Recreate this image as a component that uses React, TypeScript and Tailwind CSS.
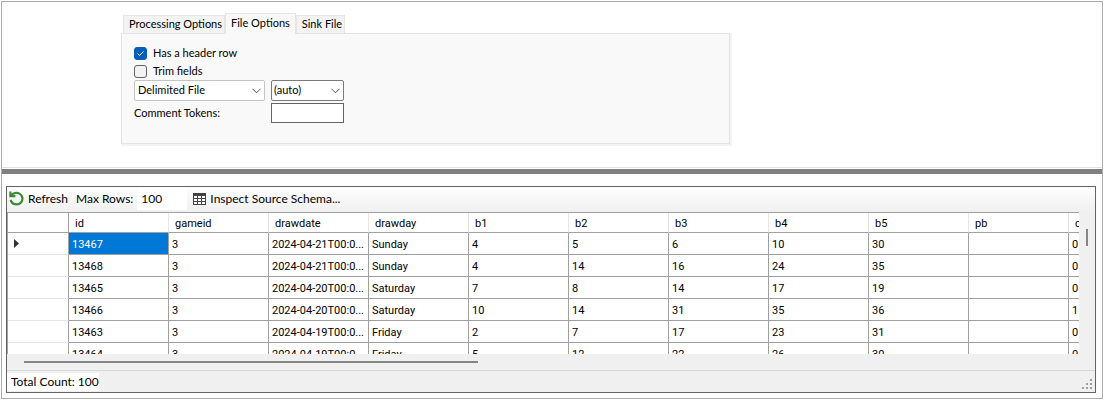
import { useState } from "react";

type Tab = "Processing Options" | "File Options" | "Sink File";

const TABS: Tab[] = ["Processing Options", "File Options", "Sink File"];

const COLUMNS = ["id", "gameid", "drawdate", "drawday", "b1", "b2", "b3", "b4", "b5", "pb", "c"];

const ROWS = [
  ["13467", "3", "2024-04-21T00:0...", "Sunday", "4", "5", "6", "10", "30", "", "0"],
  ["13468", "3", "2024-04-21T00:0...", "Sunday", "4", "14", "16", "24", "35", "", "0"],
  ["13465", "3", "2024-04-20T00:0...", "Saturday", "7", "8", "14", "17", "19", "", "0"],
  ["13466", "3", "2024-04-20T00:0...", "Saturday", "10", "14", "31", "35", "36", "", "1"],
  ["13463", "3", "2024-04-19T00:0...", "Friday", "2", "7", "17", "23", "31", "", "0"],
  ["13464", "3", "2024-04-19T00:0...", "Friday", "5", "12", "22", "26", "30", "", "0"],
];

function Chevron() {
  return (
    <svg className="pointer-events-none absolute right-1 top-1/2 -translate-y-1/2" width="9" height="6" viewBox="0 0 9 6" fill="none" stroke="#555" aria-hidden="true">
      <path d="M0.5 0.8 L4.5 4.8 L8.5 0.8" />
    </svg>
  );
}

function RefreshIcon() {
  return (
    <svg width="15" height="15" viewBox="0 0 15 15" fill="none" stroke="#388a34" strokeWidth="2.2" aria-hidden="true">
      <path d="M2 4.6 C4 1.8 7.6 1 10.4 2.6 C13.6 4.4 14.4 8.4 12.2 11.2 C9.6 14.4 4.6 14.2 2.4 10.6 C2 10 1.8 9.4 1.6 8.8" />
      <path d="M1.4 0.4 V5.2 H6.4" />
    </svg>
  );
}

function TableIcon() {
  return (
    <svg width="13" height="12" viewBox="0 0 13 12" aria-hidden="true">
      <path d="M0 0 H13 V12 H0 Z" fill="#424242" />
      <path d="M1 3h3v2h-3z M5 3h3v2h-3z M9 3h3v2h-3z M1 6h3v2h-3z M5 6h3v2h-3z M9 6h3v2h-3z M1 9h3v2h-3z M5 9h3v2h-3z M9 9h3v2h-3z" fill="#fff" />
    </svg>
  );
}

function Check({ label, initial }: { label: string; initial: boolean }) {
  const [checked, setChecked] = useState(initial);

  return (
    <label className="flex h-[18px] items-center gap-1.5">
      <span className="relative flex">
        <input
          type="checkbox"
          checked={checked}
          onChange={(e) => setChecked(e.target.checked)}
          className="size-[13px] appearance-none rounded-[3px] border border-[#626262] bg-[#f3f3f3] checked:border-[#005fb8] checked:bg-[#005fb8]"
        />
        {checked && (
          <svg className="pointer-events-none absolute inset-0" width="13" height="13" viewBox="0 0 13 13" fill="none" stroke="#fff" aria-hidden="true">
            <path d="M3.5 6.5 L5.5 8.5 L9.5 4.5" />
          </svg>
        )}
      </span>
      {label}
    </label>
  );
}

function FileOptions() {
  const [tab, setTab] = useState<Tab>("File Options");

  return (
    <section className="ml-[119px] mt-[11px] max-w-[611px] text-[11px]">
      <div role="tablist" className="flex items-end pl-0.5">
        {TABS.map((t) => (
          <button
            key={t}
            role="tab"
            aria-selected={t === tab}
            onClick={() => setTab(t)}
            className={
              t === tab
                ? "-mb-px h-[21px] border border-b-0 border-[#e5e5e5] bg-[#f9f9f9] px-[5px] pb-0.5"
                : "h-[18px] border border-b-0 border-[#e5e5e5] bg-[#f3f3f3] pl-[5px] pr-0.5"
            }
          >
            {t}
          </button>
        ))}
      </div>
      <div className="border-b-2 border-r-2 border-[#f3f3f3]">
        <div role="tabpanel" className="border border-[#e3e3e3] bg-[#f9f9f9] px-3 pb-5 pt-2.5">
          <Check label="Has a header row" initial={true} />
          <Check label="Trim fields" initial={false} />
          <div className="grid grid-cols-[131px_73px] items-center gap-x-1.5 gap-y-0.5">
            <div className="relative">
              <select aria-label="File type" className="block h-[21px] w-full appearance-none rounded-xs border border-[#c4c4c4] bg-white pl-[3px]">
                <option>Delimited File</option>
              </select>
              <Chevron />
            </div>
            <div className="relative">
              <select aria-label="Delimiter" className="block h-[21px] w-full appearance-none rounded-xs border border-[#7a7a7a] bg-white pl-0.5">
                <option>(auto)</option>
              </select>
              <Chevron />
            </div>
            <label htmlFor="tokens">Comment Tokens:</label>
            <input id="tokens" type="text" className="h-5 w-full border border-[#646464] bg-white px-0.5" />
          </div>
        </div>
      </div>
    </section>
  );
}

function DataGrid() {
  return (
    <div className="flex min-h-0 flex-1 bg-[#f0f0f0]">
      <div className="flex min-w-0 flex-1 flex-col">
        <div className="min-h-0 flex-1 overflow-hidden border-l border-t border-[#a0a0a0] bg-white">
          <table className="w-[1161px] table-fixed border-separate border-spacing-0 text-left font-[Roboto,sans-serif] text-[11px]">
            <colgroup>
              <col className="w-[61px]" />
              {COLUMNS.map((c) => (
                <col key={c} className="w-[100px]" />
              ))}
            </colgroup>
            <thead>
              <tr className="h-5">
                <th className="border-b border-r border-[#a0a0a0] p-0" />
                {COLUMNS.map((c) => (
                  <th key={c} className="border-b border-r border-b-[#a0a0a0] border-r-[#e5e5e5] p-0 pl-1.5 pt-0.5 font-normal leading-4">
                    {c}
                  </th>
                ))}
              </tr>
            </thead>
            <tbody>
              {ROWS.map((row, r) => (
                <tr key={row[0]} className="h-[22px]">
                  <th className="border-b border-r border-b-[#e5e5e5] border-r-[#a0a0a0] p-0 pl-1.5">
                    {r === 0 && (
                      <svg width="5" height="9" viewBox="0 0 5 9" fill="#333" aria-hidden="true">
                        <path d="M0 0 L5 4.5 L0 9 Z" />
                      </svg>
                    )}
                  </th>
                  {row.map((cell, c) => (
                    <td
                      key={c}
                      className={`border-b border-r border-[#a0a0a0] p-0 pl-[3px] pt-0.5 leading-4 whitespace-nowrap ${r === 0 && c === 0 ? "bg-[#0078d7] text-white" : ""}`}
                    >
                      {cell}
                    </td>
                  ))}
                </tr>
              ))}
            </tbody>
          </table>
        </div>
        <div className="flex h-4 shrink-0 items-center pl-[17px]">
          <div className="h-0.5 w-[43%] bg-[#858585]" />
        </div>
      </div>
      <div className="flex w-4 shrink-0 justify-center pt-[17px]">
        <div className="h-[17px] w-0.5 bg-[#858585]" />
      </div>
    </div>
  );
}

export default function App() {
  return (
    <div className="h-screen bg-white p-px font-[Lato,sans-serif] text-black">
      <main className="flex h-full flex-col border border-[#ababab]">
        <div className="shrink-0 border-b border-[#e3e3e3] pb-[21px]">
          <FileOptions />
        </div>
        <div className="mt-px h-[5px] shrink-0 bg-[#808080]" />
        <section className="mb-[5px] ml-1 mr-1.5 mt-3 flex min-h-0 flex-1 flex-col border border-[#646464] text-xs">
          <div className="flex h-[25px] shrink-0 items-center bg-linear-to-b from-[#fdfdfd] to-[#f0f0f0] pb-0.5 pl-0.5">
            <button className="flex items-center gap-1">
              <RefreshIcon />
              Refresh
            </button>
            <label htmlFor="max-rows" className="ml-2">
              Max Rows:
            </label>
            <input id="max-rows" type="text" defaultValue="100" className="ml-1 h-[23px] w-[50px] bg-white px-1" />
            <button className="ml-1.5 flex items-center gap-1">
              <TableIcon />
              Inspect Source Schema...
            </button>
          </div>
          <DataGrid />
          <footer className="flex h-[22px] shrink-0 items-center justify-between border-t border-[#d7d7d7] bg-[#f0f0f0]">
            <span className="bg-white pl-1 leading-[18px]">Total Count: 100</span>
            <svg className="mr-[3px] mt-1" width="10" height="10" viewBox="0 0 10 10" fill="#a0a0a0" aria-hidden="true">
              <path d="M8 0h2v2h-2z M4 4h2v2h-2z M8 4h2v2h-2z M0 8h2v2h-2z M4 8h2v2h-2z M8 8h2v2h-2z" />
            </svg>
          </footer>
        </section>
      </main>
    </div>
  );
}
